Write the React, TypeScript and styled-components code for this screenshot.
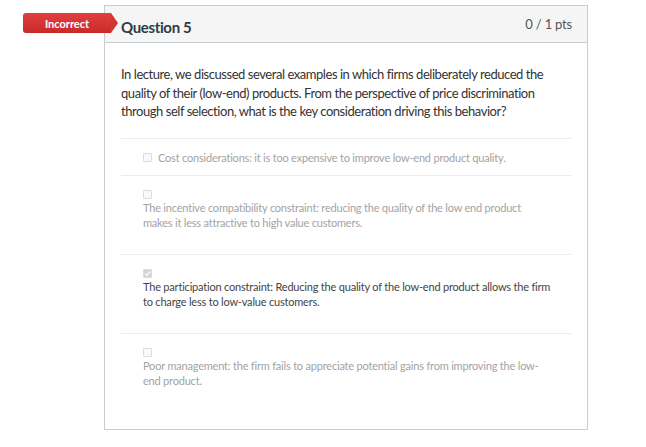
import React from "react";
import styled, { createGlobalStyle } from "styled-components";

const GlobalStyle = createGlobalStyle`
  html, body {
    margin: 0;
    padding: 0;
    background: #ffffff;
  }
  body {
    font-family: Lato, "Liberation Sans", sans-serif;
  }
`;

const Page = styled.div`
  width: 646px;
  height: 447px;
  padding: 5px 0 0 104px;
  box-sizing: border-box;
`;

const Card = styled.div`
  position: relative;
  width: 484px;
  height: 425px;
  box-sizing: border-box;
  border: 1px solid #c7cdd1;
  background: #ffffff;
`;

const Badge = styled.div`
  position: absolute;
  left: -82px;
  top: 7px;
  width: 88px;
  height: 20px;
  box-sizing: border-box;
  border-radius: 3px 0 0 3px;
  background: linear-gradient(#e0413f, #c82a2a);
  color: #ffffff;
  font-size: 11px;
  font-weight: 700;
  display: flex;
  align-items: center;
  justify-content: center;

  &:after {
    content: "";
    position: absolute;
    right: -7px;
    top: 0;
    border-top: 10px solid transparent;
    border-bottom: 10px solid transparent;
    border-left: 7px solid #d43535;
  }
`;

const Header = styled.div`
  height: 37px;
  box-sizing: border-box;
  background: #f5f5f5;
  border-bottom: 1px solid #c7cdd1;
  display: flex;
  align-items: center;
  justify-content: space-between;
  padding: 0 15px 0 16px;
`;

const Title = styled.div`
  padding-top: 6px;
  font-size: 15px;
  font-weight: 700;
  letter-spacing: -0.35px;
  color: #2d3b45;
`;

const Points = styled.div`
  font-size: 13px;
  letter-spacing: -0.2px;
  color: #555555;
`;

const Body = styled.div`
  padding: 22px 15px 0 16px;
`;

const QuestionText = styled.p`
  margin: 0;
  padding-bottom: 17px;
  font-size: 13px;
  letter-spacing: -0.45px;
  line-height: 18.5px;
  color: #333333;
  border-bottom: 1px solid #ececec;
`;

const AnswerRow = styled.div<{ $stacked?: boolean; $last?: boolean }>`
  display: flex;
  flex-wrap: wrap;
  align-items: center;
  padding: ${(p) => (p.$stacked ? "12px 15px 24px 22px" : "12px 15px 10px 22px")};
  border-bottom: ${(p) => (p.$last ? "none" : "1px solid #ececec")};
`;

const Box = styled.span<{ $checked?: boolean }>`
  width: 9px;
  height: 9px;
  margin: 2px 6px 2px 0;
  box-sizing: border-box;
  border: 1px solid #dcdcdc;
  border-radius: 1px;
  background: ${(p) => (p.$checked ? "#d4d4d4" : "#fafafa")};
  display: flex;
  align-items: center;
  justify-content: center;
`;

const AnswerText = styled.span<{ $selected?: boolean; $stacked?: boolean }>`
  flex-basis: ${(p) => (p.$stacked ? "100%" : "auto")};
  font-size: 11px;
  letter-spacing: -0.2px;
  line-height: 14.5px;
  white-space: pre-line;
  color: ${(p) => (p.$selected ? "#444444" : "#a3a3a3")};
`;

const answers = [
  {
    text: "Cost considerations: it is too expensive to improve low-end product quality.",
    selected: false,
  },
  {
    text: "The incentive compatibility constraint: reducing the quality of the low end product\nmakes it less attractive to high value customers.",
    selected: false,
  },
  {
    text: "The participation constraint: Reducing the quality of the low-end product allows the firm\nto charge less to low-value customers.",
    selected: true,
  },
  {
    text: "Poor management: the firm fails to appreciate potential gains from improving the low-\nend product.",
    selected: false,
  },
];

export default function App() {
  return (
    <Page>
      <GlobalStyle />
      <Card>
        <Badge>Incorrect</Badge>
        <Header>
          <Title>Question 5</Title>
          <Points>0 / 1 pts</Points>
        </Header>
        <Body>
          <QuestionText>
            In lecture, we discussed several examples in which firms deliberately reduced the
            quality of their (low-end) products. From the perspective of price discrimination
            through self selection, what is the key consideration driving this behavior?
          </QuestionText>
          {answers.map((a, i) => (
            <AnswerRow key={i} $stacked={i > 0} $last={i === answers.length - 1}>
              <Box $checked={a.selected}>
                {a.selected && (
                  <svg width="7" height="7" viewBox="0 0 7 7">
                    <path d="M1 3.6 L2.8 5.3 L6 1.5" stroke="#ffffff" strokeWidth="1.2" fill="none" />
                  </svg>
                )}
              </Box>
              <AnswerText $selected={a.selected} $stacked={i > 0}>
                {a.text}
              </AnswerText>
            </AnswerRow>
          ))}
        </Body>
      </Card>
    </Page>
  );
}
